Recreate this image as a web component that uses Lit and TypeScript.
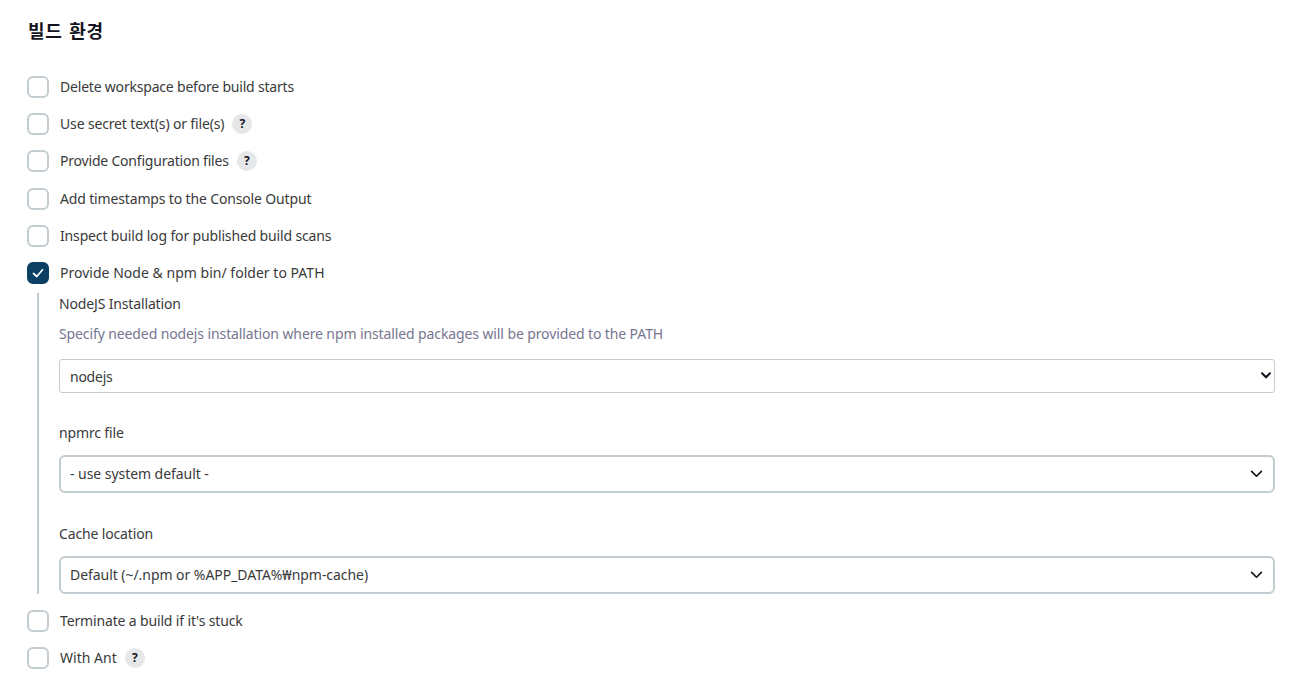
import { LitElement, html, css, svg } from "lit";
import { customElement } from "lit/decorators.js";

const chevron = svg`<svg class="chev" viewBox="0 0 14 9" width="13" height="8"><path d="M1.5 1.5 7 7l5.5-5.5" fill="none" stroke="#14141f" stroke-width="1.9" stroke-linecap="round" stroke-linejoin="round"/></svg>`;

@customElement("app-root")
export class AppRoot extends LitElement {
  static styles = css`
    :host { display: block; width: 1296px; height: 676px; overflow: hidden; background: #fff; box-sizing: border-box; padding: 17px 21px 0 27px; font-family: "Noto Sans", "Noto Sans CJK KR", sans-serif; font-size: 14px; color: #3a3a3a; letter-spacing: -0.15px; }
    h2 { margin: 0 0 33px 1px; font-size: 18px; line-height: 26px; font-weight: 700; color: #14141f; font-family: "Noto Sans CJK KR", sans-serif; letter-spacing: 0.7px; word-spacing: 2px; }
    .row { display: flex; align-items: center; height: 22px; margin-bottom: 15.2px; }
    .box { width: 22px; height: 22px; box-sizing: border-box; border: 2px solid #c3ccd1; border-radius: 6px; background: #fff; margin-right: 11px; flex: none; display: flex; align-items: center; justify-content: center; }
    .box.on { background: #0b3f63; border-color: #0b3f63; }
    .label { line-height: 22px; }
    .label.loose { letter-spacing: 0.02px; }
    .label.tight { letter-spacing: -0.2px; }
    .help { width: 20px; height: 20px; border-radius: 50%; background: #e6e7e9; color: #14141f; font-size: 12px; font-weight: 700; display: flex; align-items: center; justify-content: center; margin-left: 8px; margin-top: -1px; }
    .nested { margin: -6.2px 0 16px 10px; border-left: 2px solid #c3ccd1; padding-left: 20px; height: 301px; box-sizing: border-box; }
    .name { line-height: 20px; padding-top: 1px; }
    .desc { color: #76768f; line-height: 20px; margin-top: 10px; margin-bottom: 15px; letter-spacing: -0.11px; }
    .sel { display: flex; align-items: center; justify-content: space-between; box-sizing: border-box; background: #fff; line-height: 20px; letter-spacing: -0.05px; }
    .native { height: 34px; border: 1px solid #c3ccd1; border-radius: 3px; padding: 0 3px 0 10px; margin-bottom: 30px; letter-spacing: -0.25px; }
    .native span { padding-top: 2px; }
    .native .chev { width: 10px; height: 7px; }
    .native path { stroke-width: 2.9; }
    .custom { height: 38px; border: 2px solid #c3ccd1; border-radius: 6px; padding: 1px 10px 0 9px; }
    .f2 { margin-bottom: 12px; line-height: 20px; }
    .gap { height: 31px; }
  `;

  row(label: string, help = false, on = false, spacing = "") {
    return html`<div class="row">
      <span class="box ${on ? "on" : ""}">${on ? svg`<svg viewBox="0 0 14 14" width="14" height="14"><path d="M2.5 7.5 5.8 10.5 11.5 3.8" fill="none" stroke="#fff" stroke-width="1.7" stroke-linecap="round" stroke-linejoin="round"/></svg>` : ""}</span>
      <span class="label ${spacing}">${label}</span>
      ${help ? html`<span class="help">?</span>` : ""}
    </div>`;
  }

  render() {
    return html`
      <h2>빌드 환경</h2>
      ${this.row("Delete workspace before build starts", false, false, "tight")}
      ${this.row("Use secret text(s) or file(s)", true)}
      ${this.row("Provide Configuration files", true, false, "tight")}
      ${this.row("Add timestamps to the Console Output")}
      ${this.row("Inspect build log for published build scans")}
      ${this.row("Provide Node & npm bin/ folder to PATH", false, true, "loose")}
      <div class="nested">
        <div class="name">NodeJS Installation</div>
        <div class="desc">Specify needed nodejs installation where npm installed packages will be provided to the PATH</div>
        <div class="sel native"><span>nodejs</span>${chevron}</div>
        <div class="f2">npmrc file</div>
        <div class="sel custom"><span>- use system default -</span>${chevron}</div>
        <div class="gap"></div>
        <div class="f2">Cache location</div>
        <div class="sel custom"><span>Default (~/.npm or %APP_DATA%₩npm-cache)</span>${chevron}</div>
      </div>
      ${this.row("Terminate a build if it's stuck")}
      ${this.row("With Ant", true, false, "loose")}
    `;
  }
}
